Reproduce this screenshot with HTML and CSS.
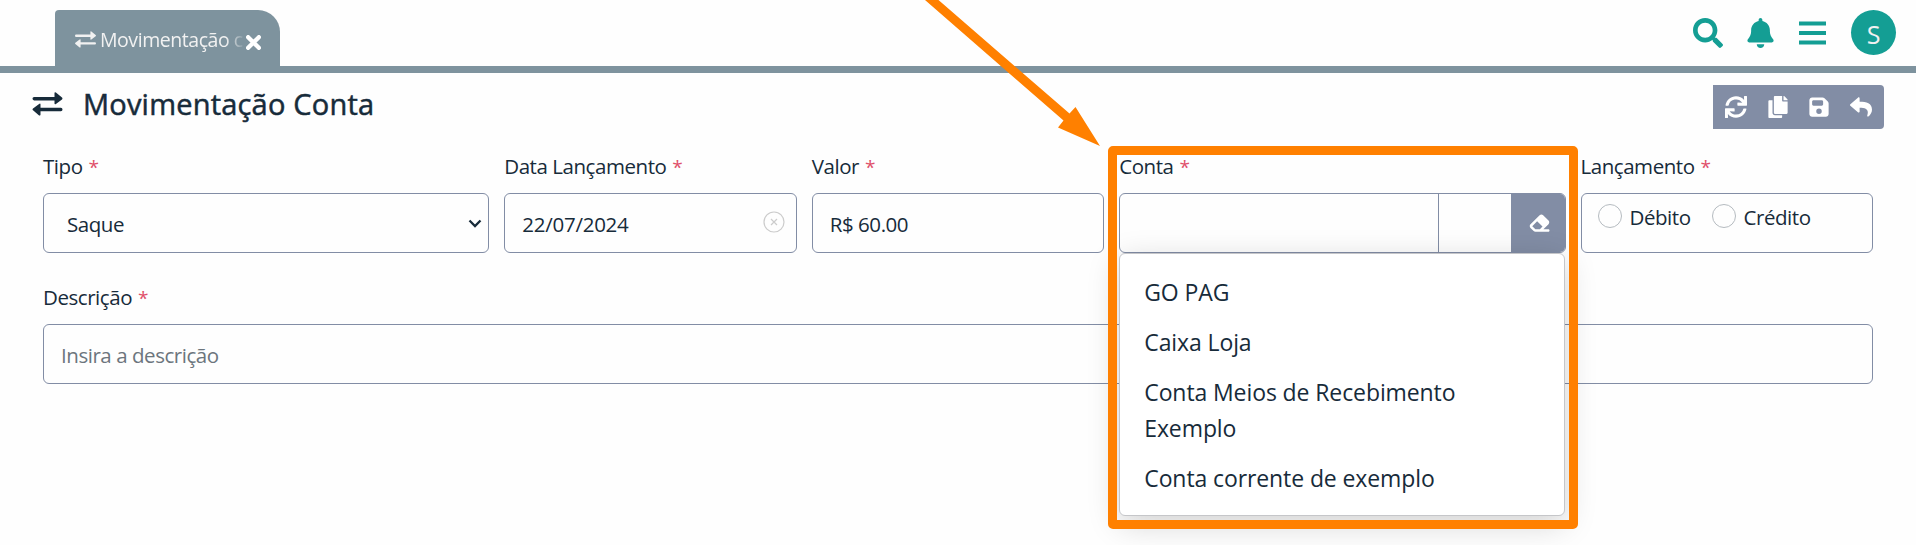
FILE: index.html
```
<!DOCTYPE html>
<html lang="pt-BR">
<head>
<meta charset="utf-8">
<title>Movimentação Conta</title>
<link rel="stylesheet" href="styles.css">
</head>
<body>
<svg class="sprite" aria-hidden="true">
  <symbol id="swap" viewBox="0 0 30 24"><path d="M0 6.6Q0 5 1.600 5H22V1.200Q22 -.2 23.400 .6L29.500 5.600Q30.400 6.600 29.500 7.500L23.400 12Q22 12.600 22 11.500V8.400H1.600Q0 8.400 0 6.600ZM30 17.400Q30 15.800 28.400 15.800H8V12.500Q8 11 6.600 12L.5 16.500Q-.4 17.400 .5 18.300L6.600 23.400Q8 24 8 22.600V19.200H28.400Q30 19.200 30 17.400Z"/></symbol>
</svg>
<header class="topbar">
  <div class="tab">
    <svg class="tab-icon"><use href="#swap"/></svg>
    <span class="tab-text">Movimentação c</span>
    <svg class="tab-close" viewBox="0 0 14 14"><path d="M2 2 12 12M12 2 2 12"/></svg>
  </div>
  <nav class="tools">
    <svg class="search" viewBox="0 0 512 512"><path d="M505 442.7L405.3 343c-4.5-4.5-10.6-7-17-7H372c27.6-35.3 44-79.7 44-128C416 93.1 322.9 0 208 0S0 93.1 0 208s93.1 208 208 208c48.3 0 92.7-16.4 128-44v16.3c0 6.4 2.5 12.5 7 17l99.7 99.7c9.4 9.4 24.6 9.4 33.9 0l28.3-28.3c9.4-9.4 9.4-24.6.1-34zM208 336c-70.7 0-128-57.2-128-128 0-70.7 57.2-128 128-128 70.7 0 128 57.2 128 128 0 70.7-57.2 128-128 128z"/></svg>
    <svg class="bell" viewBox="0 0 448 512"><path d="M224 0c-17.7 0-32 14.3-32 32V51.2C119 66 64 130.600 64 208v18.800c0 47-17.300 92.400-48.500 127.600l-7.400 8.300c-8.400 9.400-10.400 22.900-5.300 34.400S19.400 416 32 416H416c12.600 0 24-7.400 29.200-18.900s3.100-25-5.300-34.400l-7.400-8.300C401.300 319.200 384 273.900 384 226.800V208c0-77.400-55-142-128-156.800V32c0-17.700-14.300-32-32-32zm45.300 493.300c12-12 18.700-28.300 18.700-45.300H160c0 17 6.700 33.300 18.700 45.300s28.300 18.700 45.300 18.700s33.300-6.700 45.300-18.700z"/></svg>
    <svg class="menu" viewBox="0 0 27 24"><path d="M0 2.500H27M0 12H27M0 21.500H27"/></svg>
    <span class="avatar">S</span>
  </nav>
</header>
<main>
  <div class="heading">
    <svg class="heading-icon"><use href="#swap"/></svg>
    <h1>Movimentação Conta</h1>
    <div class="actions">
      <svg viewBox="0 0 512 512"><path d="M440.650 12.570l4 82.770A247.160 247.160 0 0 0 255.830 8C134.730 8 33.910 94.920 12.290 209.820A12 12 0 0 0 24.090 224h49.050a12 12 0 0 0 11.670-9.260 175.910 175.910 0 0 1 317-56.940l-101.460-4.860a12 12 0 0 0-12.570 12v47.410a12 12 0 0 0 12 12H500a12 12 0 0 0 12-12V12a12 12 0 0 0-12-12h-47.370a12 12 0 0 0-11.980 12.570zM255.830 432a175.610 175.610 0 0 1-146-77.800l101.800 4.870a12 12 0 0 0 12.570-12v-47.400a12 12 0 0 0-12-12H12a12 12 0 0 0-12 12V500a12 12 0 0 0 12 12h47.350a12 12 0 0 0 12-12.600l-4.150-82.570A247.170 247.170 0 0 0 255.830 504c121.110 0 221.930-86.920 243.550-201.820a12 12 0 0 0-11.800-14.180h-49.050a12 12 0 0 0-11.670 9.260A175.860 175.860 0 0 1 255.830 432z"/></svg>
      <svg viewBox="0 0 448 512"><path d="M320 448v40c0 13.255-10.745 24-24 24H24c-13.255 0-24-10.745-24-24V120c0-13.255 10.745-24 24-24h72v296c0 30.879 25.121 56 56 56h168zm0-344V0H152c-13.255 0-24 10.745-24 24v368c0 13.255 10.745 24 24 24h272c13.255 0 24-10.745 24-24V128H344c-13.200 0-24-10.800-24-24zm120.971-31.029L375.029 7.029A24 24 0 0 0 358.059 0H352v96h96v-6.059a24 24 0 0 0-7.029-16.970z"/></svg>
      <svg viewBox="0 0 448 512"><path d="M64 32C28.700 32 0 60.700 0 96V416c0 35.300 28.700 64 64 64H384c35.300 0 64-28.700 64-64V173.300c0-17-6.700-33.300-18.700-45.300L352 50.700C340 38.700 323.700 32 306.700 32H64zm0 96c0-17.700 14.300-32 32-32H288c17.700 0 32 14.300 32 32v64c0 17.700-14.300 32-32 32H96c-17.700 0-32-14.300-32-32V128zM224 288a64 64 0 1 1 0 128 64 64 0 1 1 0-128z"/></svg>
      <svg viewBox="0 0 512 512"><path d="M8.300 189.800 184.300 37.900C199.700 24.500 224 35.300 224 56v80.100C384.600 137.900 512 170.100 512 322.300c0 61.400-39.600 122.300-83.300 154.100-13.700 9.900-33.100-2.500-28.100-18.600C445.900 312.800 379.100 274.200 224 272v88c0 20.700-24.300 31.500-39.700 18.200l-176-152c-11.100-9.600-11.100-26.800 0-36.400z"/></svg>
    </div>
  </div>
  <form class="grid">
    <div class="field wide">
      <label>Tipo <i>*</i></label>
      <div class="box select"><span>Saque</span><svg class="chevron" viewBox="0 0 14 9"><path d="M1.500 1.500 7 7 12.500 1.500"/></svg></div>
    </div>
    <div class="field">
      <label>Data Lançamento <i>*</i></label>
      <div class="box"><span class="date">22/07/2024</span><svg class="clear" viewBox="0 0 22 22"><circle cx="11" cy="11" r="10"/><path d="M8 8 14 14M14 8 8 14"/></svg></div>
    </div>
    <div class="field">
      <label>Valor <i>*</i></label>
      <div class="box"><span>R$ 60.00</span></div>
    </div>
    <div class="field wide conta">
      <label>Conta <i>*</i></label>
      <div class="box group"><span class="name"></span><span class="code"></span>
        <span class="erase"><svg viewBox="0 0 576 512"><path d="M290.700 57.400 57.400 290.700c-25 25-25 65.500 0 90.500l80 80c12 12 28.300 18.700 45.300 18.700H512c17.700 0 32-14.300 32-32s-14.300-32-32-32H387.900L518.600 285.300c25-25 25-65.500 0-90.500L381.300 57.400c-25-25-65.500-25-90.500 0zM297.400 416H182.600l-80-80L227.300 211.300 364.700 348.700 297.400 416z"/></svg></span>
      </div>
      <ul class="menu-list">
        <li>GO PAG</li>
        <li>Caixa Loja</li>
        <li>Conta Meios de Recebimento Exemplo</li>
        <li>Conta corrente de exemplo</li>
      </ul>
      <div class="highlight"></div>
    </div>
    <div class="field">
      <label>Lançamento <i>*</i></label>
      <div class="box radios"><span class="radio"></span><span>Débito</span><span class="radio second"></span><span>Crédito</span></div>
    </div>
    <div class="field full">
      <label>Descrição <i>*</i></label>
      <div class="box"><span class="placeholder">Insira a descrição</span></div>
    </div>
  </form>
</main>
<svg class="arrow" viewBox="0 0 220 160"><path d="M25 0H38.500L169.500 113.500 175.500 107 200 146 158 127.500 163.500 120.500Z"/></svg>
</body>
</html>
```
FILE: styles.css
```
* { box-sizing: border-box; }
body {
  margin: 0;
  height: 545px;
  overflow: hidden;
  background: #fefefe;
  color: #172b3a;
  font-family: "Open Sans", "Noto Sans", sans-serif;
  font-size: 20.5px;
  letter-spacing: -0.45px;
}
svg { display: block; flex: none; fill: currentColor; }
.sprite { position: absolute; width: 0; height: 0; }
.topbar {
  display: flex;
  justify-content: space-between;
  height: 73px;
  padding: 10px 20px 0 55px;
  border-bottom: 7px solid #7e939e;
}
.tab {
  display: flex;
  align-items: center;
  width: 225px;
  height: 56px;
  padding: 0 20px 0 20px;
  border-radius: 4px 22px 0 0;
  background: #7e939e;
  color: #f1f1f1;
}
.tab-icon { width: 21px; height: 17px; margin-top: 3px; }
.tab-text {
  width: 143px;
  height: 28px;
  margin: 3px 0 0 4px;
  white-space: nowrap;
  line-height: 28px;
  font-size: 19.5px;
  letter-spacing: -0.45px;
  mask-image: linear-gradient(90deg, #000 88%, transparent 102%);
}
.tab-close { width: 15px; height: 15px; margin: 9px 0 0 3px; stroke: #fff; stroke-width: 4; stroke-linecap: round; }
.tools { display: flex; height: 45px; align-items: center; color: #149e94; }
.search { width: 30px; height: 30px; }
.bell { width: 27px; height: 30px; margin-left: 24px; }
.menu { width: 27px; height: 24px; margin-left: 25px; stroke: currentColor; stroke-width: 4; }
.avatar {
  display: grid;
  place-items: center;
  width: 45px;
  height: 45px;
  margin-left: 25px;
  padding-top: 2px;
  border-radius: 50%;
  background: #149e94;
  color: #f1f1f1;
  font-size: 25px;
}
.heading { display: flex; height: 73px; padding: 12px 32px 0; }
.heading-icon { width: 31px; height: 24px; margin-top: 7px; }
h1 {
  margin: 0 auto 0 20px;
  font-size: 29px;
  line-height: 38px;
  font-weight: 500;
  letter-spacing: 0.2px;
  -webkit-text-stroke: 0.5px currentColor;
}
.actions {
  display: flex;
  align-items: center;
  justify-content: space-between;
  width: 171px;
  height: 44px;
  padding: 0 12px;
  border-radius: 0 4px 4px 0;
  background: #828da5;
  color: #fff;
}
.actions svg { width: 22px; height: 22px; }
.grid { display: grid; grid-template-columns: repeat(12, 1fr); column-gap: 15px; padding: 0 43px; }
.field { grid-column: span 2; height: 131px; }
.wide { grid-column: span 3; }
.full { grid-column: span 12; }
.conta { position: relative; }
label { display: block; height: 47px; padding: 6px 0 0; line-height: 28px; white-space: nowrap; }
label i { margin-left: 1px; color: #e0506a; font-style: normal; font-size: 19px; }
.box {
  display: flex;
  align-items: center;
  justify-content: space-between;
  height: 60px;
  padding: 4px 17px 2px;
  border: 1px solid #828da5;
  border-radius: 6px;
  white-space: nowrap;
}
.date { letter-spacing: -0.25px; }
.select { padding: 4px 6px 2px 23px; }
.chevron { width: 14px; height: 9px; margin-top: -2px; fill: none; stroke: #172b3a; stroke-width: 2.300; }
.clear { width: 22px; height: 22px; margin: -4px -6px 0 0; fill: none; stroke: #ccc; stroke-width: 1.200; }
.placeholder { color: #6c757d; }
.radios { justify-content: flex-start; align-items: flex-start; padding: 9px 16px; }
.radio { width: 24px; height: 24px; margin: 1px 8px 0 0; border: 1px solid #b5bbc0; border-radius: 50%; }
.second { margin-left: 21px; }
.group { padding: 0; overflow: hidden; }
.name { flex: 1; align-self: stretch; border-right: 1px solid #828da5; }
.code { width: 72px; }
.erase { display: grid; place-items: center; align-self: stretch; width: 54px; padding-left: 3px; background: #828da5; color: #fff; }
.erase svg { width: 23px; height: 20px; }
.menu-list {
  position: absolute;
  z-index: 1;
  top: 107px;
  left: 0;
  width: 446px;
  height: 263px;
  margin: 0;
  padding: 13px 0;
  border: 1px solid #c5c6c9;
  border-radius: 6px;
  background: #fff;
  box-shadow: 0 8px 32px rgba(0, 0, 0, .18);
  list-style: none;
  font-size: 23px;
  line-height: 36px;
  letter-spacing: -0.1px;
}
.menu-list li { padding: 7px 60px 7px 24px; }
.highlight { position: absolute; z-index: 2; top: 0; left: -11px; width: 470px; height: 383px; border: 9px solid #ff8000; border-radius: 5px; }
.arrow { position: absolute; top: 0; left: 900px; width: 220px; height: 160px; fill: #ff8000; }
```
